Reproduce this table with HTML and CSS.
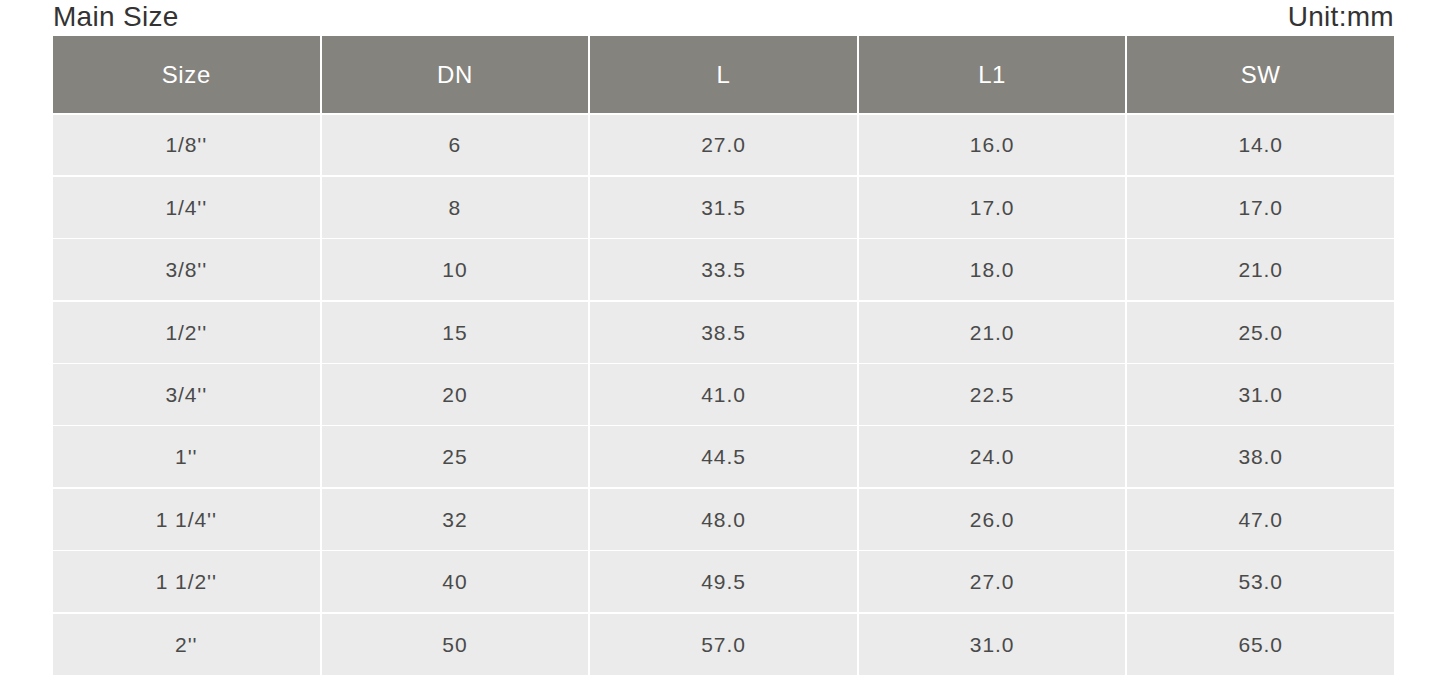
FILE: index.html
```html
<!DOCTYPE html>
<html>
<head>
<meta charset="utf-8">
<link rel="stylesheet" href="styles.css">
</head>
<body>
<div class="wrap">
  <div class="caption">
    <span class="title">Main Size</span>
    <span class="unit">Unit:mm</span>
  </div>
  <div class="table">
    <div class="th">Size</div><div class="th">DN</div><div class="th">L</div><div class="th">L1</div><div class="th">SW</div>
    <div class="td">1/8''</div><div class="td">6</div><div class="td">27.0</div><div class="td">16.0</div><div class="td">14.0</div>
    <div class="td">1/4''</div><div class="td">8</div><div class="td">31.5</div><div class="td">17.0</div><div class="td">17.0</div>
    <div class="td">3/8''</div><div class="td">10</div><div class="td">33.5</div><div class="td">18.0</div><div class="td">21.0</div>
    <div class="td">1/2''</div><div class="td">15</div><div class="td">38.5</div><div class="td">21.0</div><div class="td">25.0</div>
    <div class="td">3/4''</div><div class="td">20</div><div class="td">41.0</div><div class="td">22.5</div><div class="td">31.0</div>
    <div class="td">1''</div><div class="td">25</div><div class="td">44.5</div><div class="td">24.0</div><div class="td">38.0</div>
    <div class="td">1 1/4''</div><div class="td">32</div><div class="td">48.0</div><div class="td">26.0</div><div class="td">47.0</div>
    <div class="td">1 1/2''</div><div class="td">40</div><div class="td">49.5</div><div class="td">27.0</div><div class="td">53.0</div>
    <div class="td">2''</div><div class="td">50</div><div class="td">57.0</div><div class="td">31.0</div><div class="td">65.0</div>
  </div>
</div>
</body>
</html>
```
FILE: styles.css
```css
html, body {
  margin: 0;
  padding: 0;
  background: #ffffff;
}
.wrap {
  padding: 0 46px 0 53px;
}
.caption {
  display: flex;
  justify-content: space-between;
  align-items: flex-end;
  height: 36px;
  font-family: "Liberation Sans", Arial, sans-serif;
  font-size: 28px;
  color: #333333;
  line-height: 32px;
}
.caption span {
  padding-bottom: 3px;
}
.title {
  letter-spacing: 0.3px;
}
.unit {
  letter-spacing: 0.3px;
}
.table {
  display: grid;
  grid-template-columns: repeat(5, 1fr);
  grid-template-rows: 77px repeat(9, 60.9px);
  column-gap: 2px;
  row-gap: 1.5px;
}
.th {
  background: #85837e;
  color: #ffffff;
  font-family: "Liberation Sans", Arial, sans-serif;
  font-size: 24px;
  display: flex;
  align-items: center;
  justify-content: center;
  letter-spacing: 0.6px;
}
.td {
  background: #ebebeb;
  color: #4a4a4a;
  font-family: "Liberation Sans", Arial, sans-serif;
  font-size: 21px;
  letter-spacing: 0.9px;
  display: flex;
  align-items: center;
  justify-content: center;
  padding-top: 1px;
}
```
